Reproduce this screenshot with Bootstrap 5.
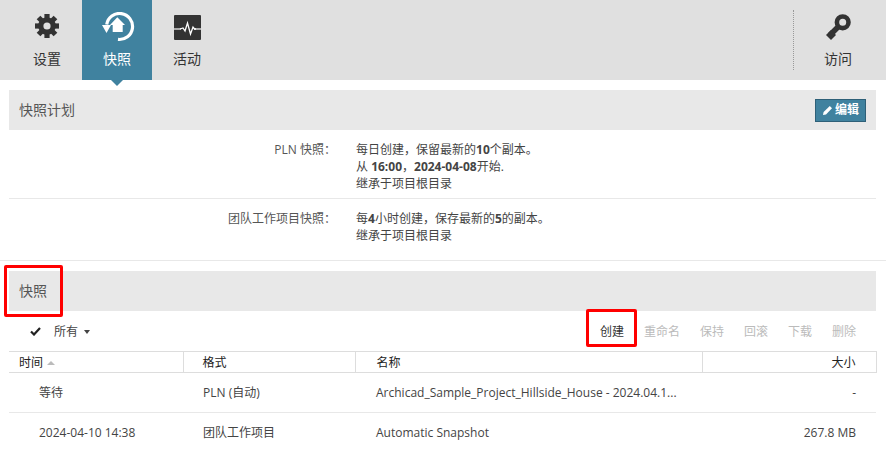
<!DOCTYPE html>
<html lang="zh">
<head>
<meta charset="utf-8">
<title>快照</title>
<link rel="stylesheet" href="https://cdn.jsdelivr.net/npm/bootstrap@5.3.0/dist/css/bootstrap.min.css">
<style>
html,body{height:450px;overflow:hidden}
body{font-family:"Open Sans","Noto Sans CJK SC",sans-serif;font-size:12px;line-height:17px;color:#444;background:#fff}
.topbar{height:80px;background:#e0e0e0;padding-left:12px;padding-right:13px}
.tabitem{width:70px;height:80px;position:relative;color:#333;font-size:14px;padding-top:12px}
.tabitem svg{display:block;height:30px;width:46px;margin-bottom:8px}
.tabitem.on{background:#40829f;color:#fff}
.tabitem.on::after{content:"";position:absolute;left:29px;top:80px;border-style:solid;border-width:6px 6px 0;border-color:#40829f transparent transparent}
.vsep{border-left:1px dotted #999;height:60px;margin:10px 9px 0 0}
.sechead{height:40px;margin:0 10px 0 9px;background:#e8e8e8;padding:0 10px;font-size:14px;color:#555}
.secttl{margin-top:-2px}
.editbtn{height:23px;width:51px;background:#40829f;border:1px solid #2e6078;color:#fff;font-weight:700;font-size:12px;padding:0;border-radius:0;line-height:20px;gap:2px}
.planrow{margin-left:9px;margin-right:10px}
.planlabel{width:327px;text-align:right;color:#555;flex:none}
.plantext{margin-left:20px;color:#444}
.plan1{height:59px;padding-top:1px;border-bottom:1px solid #e8e8e8}
.plan2{height:61px;padding-top:11px}
.hairline{border-top:1px solid #e8e8e8;margin-bottom:10px}
.plantext b{color:#444}
.toolrow{height:40px;position:relative;padding:0 30px 0 30px}
.allpick{font-size:12px;color:#444;margin-left:13px}
.minicaret{display:inline-block;border-style:solid;border-width:4px 3px 0;border-color:#444 transparent transparent;margin-left:6px;vertical-align:2px}
.act{color:#bbb;margin-left:20px}
.act.live{color:#333}
.markup{position:absolute;border:3px solid #f00;border-radius:2px;pointer-events:none}
.mark-left{left:4px;top:265px;width:59px;height:52px}
.mark-right{left:586px;top:309px;width:51px;height:38px}
.snaptable{width:867px;margin-left:9px;table-layout:fixed;border-collapse:collapse;font-size:12px;color:#444}
.snaptable th{height:21px;padding:0 0 0 10px;font-weight:400;color:#222;border-top:1px solid #ddd;border-bottom:1px solid #ddd;border-right:1px solid #ddd;line-height:19px;font-size:12px}
.snaptable th:last-child{text-align:right;padding-right:20px}
.snaptable td{height:40px;padding:0 0 0 20px;border-bottom:1px solid #e8e8e8;white-space:nowrap;vertical-align:middle}
.snaptable td:last-child{text-align:right;padding-right:20px}
.snaptable td:first-child{padding-left:30px}
.snaptable td.namecell{padding-left:21px}
.sortup{display:inline-block;border-style:solid;border-width:0 4px 4px;border-color:transparent transparent #bbb;margin-left:4px;vertical-align:2px}
.nameth{padding-left:21px !important}
.fmtth{padding-left:19px !important}
.gapbefore{height:10px}
</style>
</head>
<body class="position-relative">
<div class="topbar d-flex">
  <div class="tabitem d-flex flex-column align-items-center">
    <svg viewBox="0 0 46 30"><g transform="translate(23 14)" fill="#333"><rect x="-2.600" y="-12" width="5.200" height="24"/><rect x="-2.600" y="-12" width="5.200" height="24" transform="rotate(45)"/><rect x="-2.600" y="-12" width="5.200" height="24" transform="rotate(90)"/><rect x="-2.600" y="-12" width="5.200" height="24" transform="rotate(135)"/><circle r="8.800"/><circle r="3.600" fill="#e0e0e0"/></g></svg>
    <span>设置</span>
  </div>
  <div class="tabitem on d-flex flex-column align-items-center">
    <svg viewBox="0 0 46 30"><path d="M12.700 12.500A13 13 0 1 1 24 27.400" fill="none" stroke="#fff" stroke-width="3.200"/><path d="M8 13h9l-4.500 8z" fill="#fff"/><path d="M23.300 5.300L31 13h-2.300v7h-10v-7H16z" fill="#fff"/></svg>
    <span>快照</span>
  </div>
  <div class="tabitem d-flex flex-column align-items-center">
    <svg viewBox="0 0 46 30"><rect x="10" y="3" width="27" height="25" rx="1" fill="#333"/><path d="M10 17h7M30 17h7" stroke="#aaa" stroke-width="2"/><path d="M16 17l3-1 2 3 2.500-8 3 11 2.500-7 1.500 2H32" fill="none" stroke="#fff" stroke-width="1.300"/></svg>
    <span>活动</span>
  </div>
  <div class="ms-auto vsep"></div>
  <div class="tabitem d-flex flex-column align-items-center">
    <svg viewBox="0 0 46 30"><circle cx="27.700" cy="10.300" r="5.800" fill="none" stroke="#333" stroke-width="4.600"/><path d="M24 14L15 23" stroke="#333" stroke-width="5.500"/><path d="M11 23l5 5 5-5-5-5z" fill="#333"/></svg>
    <span>访问</span>
  </div>
</div>
<div class="gapbefore"></div>
<div class="sechead d-flex align-items-center justify-content-between">
  <span class="secttl">快照计划</span>
  <button type="button" class="btn editbtn d-flex align-items-center justify-content-center me-0"><svg width="11" height="11" viewBox="0 0 11 11"><path d="M1 10l.6-3L7.800 1l2.200 2.200L4 9.400z" fill="#fff"/></svg>编辑</button>
</div>
<div class="gapbefore"></div>
<div class="planrow d-flex plan1">
  <div class="planlabel">PLN 快照：</div>
  <div class="plantext">每日创建，保留最新的<b>10</b>个副本。<br>从 <b>16:00</b>，<b>2024-04-08</b>开始.<br>继承于项目根目录</div>
</div>
<div class="planrow d-flex plan2">
  <div class="planlabel">团队工作项目快照：</div>
  <div class="plantext">每<b>4</b>小时创建，保存最新的<b>5</b>的副本。<br>继承于项目根目录</div>
</div>
<div class="hairline"></div>
<div class="sechead d-flex align-items-center"><span class="secttl">快照</span></div>
<div class="toolrow d-flex align-items-center">
  <svg width="11" height="9" viewBox="0 0 11 9"><path d="M1 4.500l3 3L10 1" fill="none" stroke="#222" stroke-width="2.200"/></svg>
  <span class="allpick">所有<i class="minicaret"></i></span>
  <span class="act live ms-auto">创建</span>
  <span class="act">重命名</span>
  <span class="act">保持</span>
  <span class="act">回滚</span>
  <span class="act">下载</span>
  <span class="act">删除</span>
</div>
<table class="snaptable">
  <colgroup><col style="width:174px"><col style="width:172px"><col style="width:347px"><col style="width:174px"></colgroup>
  <thead><tr><th>时间<i class="sortup"></i></th><th class="fmtth">格式</th><th class="nameth">名称</th><th>大小</th></tr></thead>
  <tbody>
    <tr><td>等待</td><td>PLN (自动)</td><td class="namecell">Archicad_Sample_Project_Hillside_House - 2024.04.1...</td><td>-</td></tr>
    <tr><td>2024-04-10 14:38</td><td>团队工作项目</td><td class="namecell">Automatic Snapshot</td><td>267.8 MB</td></tr>
  </tbody>
</table>
<div class="markup mark-left"></div>
<div class="markup mark-right"></div>
<script src="https://cdn.jsdelivr.net/npm/bootstrap@5.3.0/dist/js/bootstrap.bundle.min.js"></script>
</body>
</html>
